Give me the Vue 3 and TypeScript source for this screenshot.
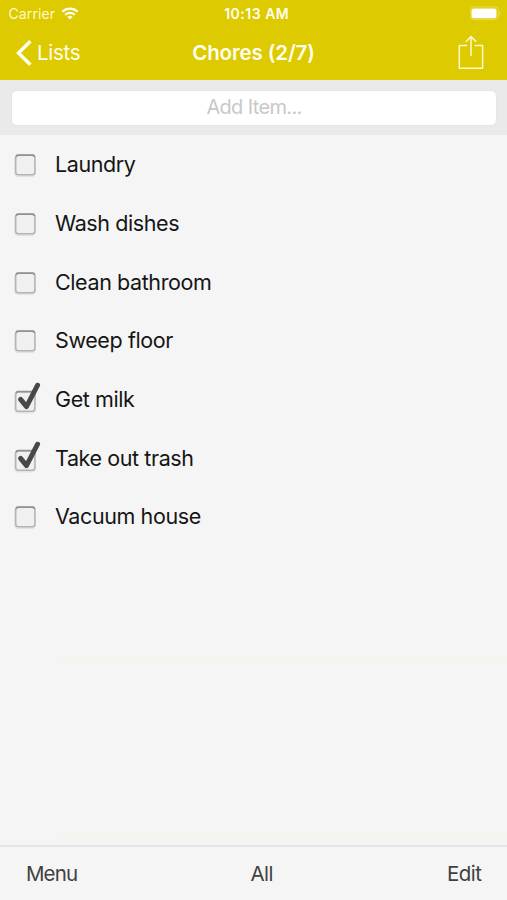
<script setup lang="ts">
interface Chore {
  name: string
  done: boolean
}

const chores: Chore[] = [
  { name: 'Laundry', done: false },
  { name: 'Wash dishes', done: false },
  { name: 'Clean bathroom', done: false },
  { name: 'Sweep floor', done: false },
  { name: 'Get milk', done: true },
  { name: 'Take out trash', done: true },
  { name: 'Vacuum house', done: false },
]
const emptyRows = 5
const doneCount = chores.filter((c) => c.done).length
</script>

<template>
  <div class="screen">
    <header class="header">
      <div class="status">
        <div class="carrier">
          <span>Carrier</span>
          <svg class="wifi" width="18" height="13" viewBox="0 0 18 13" fill="none" stroke="#fffef0">
            <path d="M1.3 4.8C5.6.6 12.4.6 16.7 4.8" stroke-width="2.2" />
            <path d="M4.1 7.8c2.8-2.6 7-2.6 9.8 0" stroke-width="2.1" />
            <path d="M6.3 9.8c1.6-1.3 3.8-1.3 5.4 0L9 12.6z" fill="#fffef0" stroke="none" />
          </svg>
        </div>
        <span class="time">10:13 AM</span>
        <svg class="battery" width="33" height="15" viewBox="0 0 33 15">
          <rect x=".1" y=".9" width="28.2" height="12.8" rx="3.6" fill="none" stroke="#eadb55" stroke-width="1" />
          <rect x="1.5" y="2.4" width="25" height="9.8" rx="2" fill="#fff" />
          <path d="M29.4 5.2c1.7.6 1.7 3.4 0 4z" fill="#eadb55" />
        </svg>
      </div>
      <nav class="nav">
        <div class="back">
          <svg width="16" height="26" viewBox="0 0 16 26" fill="none" stroke="#fffef0" stroke-width="3.5">
            <path d="M14.4 1.3 2.5 13l11.9 11.7" />
          </svg>
          <span>Lists</span>
        </div>
        <h1 class="title">Chores ({{ doneCount }}/{{ chores.length }})</h1>
        <svg class="share" width="26" height="35" viewBox="0 0 26 35" fill="none" stroke="#fff9cc" stroke-width="1.5">
          <path d="M9.2 10.4H1.3v22.8h23.3V10.4h-7.9" stroke-linejoin="round" />
          <path d="M13 21V1.8M7.8 6.8 13 1.6l5.2 5.2" />
        </svg>
      </nav>
    </header>

    <div class="add-bar">
      <input class="add-input" type="text" placeholder="Add Item..." />
    </div>

    <ul class="list">
      <li v-for="chore in chores" :key="chore.name" class="row">
        <svg class="check" width="32" height="34" viewBox="0 0 32 34">
          <g :transform="chore.done ? 'translate(0 1.5)' : undefined">
            <rect x="2.8" y="9" width="20.4" height="20.2" rx="3.4" fill="#ededed" stroke="#e2e2e2" stroke-width="1.5" />
            <rect x="3.7" y="8.3" width="19.2" height="19.4" rx="2.8" fill="#f0f0f0" stroke="#b4b4b4" stroke-width="1.5" />
            <path d="M4.2 9.8q.2-1.6 2-1.6h14.3q1.8 0 2 1.6" fill="none" stroke="#929292" stroke-width="1.8" />
          </g>
          <path
            v-if="chore.done"
            d="m8.6 17.4 5.9 7.2L25.6 3.2"
            fill="none" stroke="#484848" stroke-width="4.9"
            stroke-linecap="round" stroke-linejoin="round"
          />
        </svg>
        <span class="name">{{ chore.name }}</span>
      </li>
      <li v-for="n in emptyRows" :key="n" class="row" :class="{ ruled: n === 2 || n === 5, faint: n === 3 }"></li>
    </ul>

    <footer class="toolbar">
      <span class="menu">Menu</span>
      <span class="all">All</span>
      <span class="edit">Edit</span>
    </footer>
  </div>
</template>

<style>
body {
  margin: 0;
}
</style>

<style scoped>
.screen {
  display: flex;
  flex-direction: column;
  height: 900px;
  overflow: hidden;
  background: #f5f5f5;
  font-family: Inter, 'Liberation Sans', sans-serif;
  color: #151515;
}
.header {
  flex: none;
  box-sizing: border-box;
  height: 79.6px;
  background: #deca00;
  color: #fffef0;
}
.status {
  display: grid;
  grid-template-columns: 1fr auto 1fr;
  align-items: center;
  height: 27px;
  padding: 0 4px 0 8.5px;
  font-size: 14px;
}
.carrier {
  display: flex;
  align-items: center;
  gap: 6px;
  color: #fffac8;
  letter-spacing: 0.1px;
}
.time {
  font-weight: 600;
  font-size: 14px;
  letter-spacing: 0.5px;
  padding-left: 2px;
}
.battery {
  justify-self: end;
}
.nav {
  display: grid;
  grid-template-columns: 1fr auto 1fr;
  align-items: center;
  height: 51px;
  padding: 0 23px 0 23px;
}
.back {
  display: flex;
  align-items: center;
  gap: 5px;
  margin-left: -7px;
  font-size: 20.5px;
  letter-spacing: -0.3px;
}
.title {
  margin: 0;
  font-size: 20.5px;
  font-weight: 600;
  letter-spacing: -0.12px;
}
.share {
  justify-self: end;
}
.add-bar {
  flex: none;
  box-sizing: border-box;
  height: 55.4px;
  padding: 10px 10px 0 11px;
  background: #eaeaeb;
}
.add-input {
  display: block;
  box-sizing: border-box;
  width: 100%;
  height: 36px;
  padding: 0 0 1px;
  border: 1px solid #e6e6e7;
  border-radius: 6px;
  outline: none;
  background: #fff;
  font: 20px Inter, 'Liberation Sans', sans-serif;
  letter-spacing: -0.65px;
  text-align: center;
}
.add-input::placeholder {
  color: #c8c8c9;
  opacity: 1;
}
.list {
  flex: 1;
  min-height: 0;
  margin: 0;
  padding: 0;
  overflow: hidden;
  list-style: none;
}
.row {
  display: flex;
  align-items: center;
  box-sizing: border-box;
  height: 58.67px;
  padding-left: 12px;
}
.ruled,
.faint {
  margin-left: 55px;
  border-bottom: 3px solid #f5f5e9;
}
.faint {
  border-color: #f6f6f0;
}
.check {
  flex: none;
  margin-right: 11px;
}
.name {
  font-size: 21.5px;
  letter-spacing: -0.4px;
}
.toolbar {
  flex: none;
  display: grid;
  grid-template-columns: 1fr auto 1fr;
  align-items: center;
  box-sizing: border-box;
  height: 55px;
  padding: 0 25.5px 1px 26px;
  border-top: 2px solid #e5e5e5;
  font-size: 20.5px;
  letter-spacing: -0.5px;
  color: #414141;
}
.menu {
  letter-spacing: -0.9px;
}
.all {
  padding-left: 16px;
}
.edit {
  justify-self: end;
}
</style>
